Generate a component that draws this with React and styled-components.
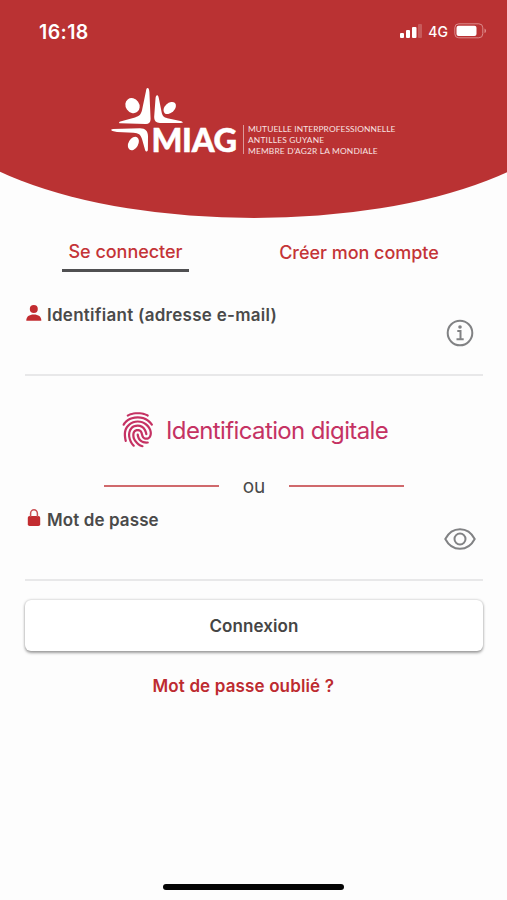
import React from "react";
import styled, { createGlobalStyle } from "styled-components";
import { IoFingerPrint } from "react-icons/io5";

const Global = createGlobalStyle`
  * { box-sizing: border-box; }
  body { margin: 0; background: #fdfdfd; }
  button { border: 0; background: none; padding: 0; font: inherit; }
`;

const Screen = styled.main`
  width: 507px;
  height: 900px;
  display: flex;
  flex-direction: column;
  overflow: hidden;
  background: #fdfdfd;
  color: #4a4a4a;
  font-family: Inter, "Liberation Sans", sans-serif;
`;

const Header = styled.header`
  flex: none;
  width: 660px;
  height: 218px;
  margin-left: -76.5px;
  padding: 0 76.5px;
  background: #ba3233;
  border-radius: 0 0 330px 330px / 0 0 128px 128px;
  color: #fff;
`;

const StatusBar = styled.div`
  display: flex;
  align-items: center;
  justify-content: space-between;
  height: 62px;
  padding: 0 20px 0 39px;
`;

const Time = styled.span`
  padding-top: 2px;
  font-size: 19.5px;
  font-weight: 600;
  letter-spacing: 0.4px;
`;

const StatusIcons = styled.div`
  display: flex;
  align-items: center;
  gap: 6px;
`;

const Network = styled.span`
  font-size: 14px;
  font-weight: 500;
`;

const Logo = styled.div`
  display: flex;
  height: 72px;
  margin: 24px 0 0 111px;
`;

const LogoMark = styled.svg`
  flex: none;
  width: 72px;
  height: 72px;
  fill: #fff;
`;

const Brand = styled.strong`
  width: 86px;
  margin: 37px 0 0 -31.5px;
  font: 900 32.5px/34px Lato, sans-serif;
  letter-spacing: -0.3px;
  -webkit-text-stroke: 0.5px #fff;
`;

const Tagline = styled.div`
  flex: none;
  height: 29px;
  margin: 39px 0 0 5.5px;
  padding-left: 4px;
  border-left: 1px solid #dc9a9a;
  color: #f8e2e2;
  font: 400 8.4px/11px Lato, sans-serif;
  white-space: nowrap;
`;

const TagLine = styled.div`
  margin-top: ${(p) => p.$offset || 0}px;
  letter-spacing: ${(p) => p.$track}px;
`;

const Tabs = styled.nav`
  display: flex;
  height: 57px;
  padding: 17px 0 0 62px;
`;

const Tab = styled.button`
  flex: none;
  width: ${(p) => p.$width}px;
  height: 37px;
  margin-right: 80px;
  padding-top: 1px;
  padding-bottom: ${(p) => (p.$active ? 2 : 0)}px;
  border-bottom: 3px solid ${(p) => (p.$active ? "#505052" : "transparent")};
  color: #c43437;
  font-size: 18px;
  font-weight: 500;
  letter-spacing: -0.03px;
  white-space: nowrap;
`;

const Field = styled.section`
  flex: none;
  display: flex;
  justify-content: space-between;
  height: ${(p) => p.$height}px;
  margin: 0 24px 0 25px;
  border-bottom: 2px solid #e8e8e9;
`;

const FieldLabel = styled.label`
  display: flex;
  align-items: center;
  height: 24px;
  margin-top: ${(p) => p.$top}px;
  font-size: 17px;
  font-weight: 600;
  letter-spacing: ${(p) => p.$track}px;
`;

const LabelIcon = styled.svg`
  width: 18px;
  height: 20px;
  margin: 0 4px 5px 0;
  fill: #c22c30;
`;

const FieldAction = styled.svg`
  width: 34px;
  height: 30px;
  margin: ${(p) => p.$top}px 6.5px 0 0;
  fill: none;
  stroke: #818284;
  stroke-width: 2;
`;

const Biometric = styled.button`
  flex: none;
  display: flex;
  align-items: center;
  height: 50px;
  margin: 29px 0 0 119px;
  color: #c53263;
  font-size: 24px;
  letter-spacing: -0.62px;
  white-space: nowrap;

  svg {
    width: 37.5px;
    height: 37.5px;
    margin-right: 9.5px;
  }
`;

const Separator = styled.div`
  flex: none;
  display: flex;
  align-items: center;
  height: 30px;
  margin: 16px 103px 0 104px;
  gap: 24px;
  font-size: 19px;

  &::before, &::after {
    content: "";
    flex: 1;
    height: 2px;
    background: #d0696c;
  }
`;

const Submit = styled.button`
  flex: none;
  height: 51px;
  margin: 19px 24px 0 25px;
  border-radius: 6px;
  background: #fff;
  box-shadow: 0 1.5px 3px rgba(0, 0, 0, 0.36), 0 0 3px rgba(0, 0, 0, 0.14);
  color: #454545;
  font-size: 17px;
  font-weight: 600;
  letter-spacing: 0.1px;
`;

const Forgot = styled.button`
  align-self: flex-start;
  height: 24px;
  margin: 23px 0 0 152.5px;
  color: #bd2b30;
  font-size: 17px;
  font-weight: 600;
  letter-spacing: 0.14px;
  white-space: nowrap;
`;

const HomeBar = styled.div`
  flex: none;
  width: 181px;
  height: 6px;
  margin: auto 0 10px 163px;
  border-radius: 3px;
  background: #050505;
`;

const Signal = () => (
  <svg width="22" height="14" viewBox="0 0 22 14" fill="#fff">
    <rect x="0" y="9" width="4" height="5" rx="1" />
    <rect x="6" y="6" width="4" height="8" rx="1" />
    <rect x="12" y="3" width="4.5" height="11" rx="1" />
    <rect x="18" y="0" width="4" height="14" rx="1" opacity="0.2" />
  </svg>
);

const Battery = () => (
  <svg width="33" height="16" viewBox="0 0 33 16">
    <rect x="0.8" y="0.8" width="28" height="14" rx="4" fill="none" stroke="#dd8b8b" />
    <rect x="2.5" y="2.7" width="20" height="10.3" rx="2" fill="#fff" />
    <path d="M30.5 5.5c2 .8 2 3.8 0 4.6z" fill="#dd8b8b" />
  </svg>
);

export default function App() {
  return (
    <Screen>
      <Global />
      <Header>
        <StatusBar>
          <Time>16:18</Time>
          <StatusIcons>
            <Signal />
            <Network>4G</Network>
            <Battery />
          </StatusIcons>
        </StatusBar>
        <Logo>
          <LogoMark viewBox="0 0 72 72">
            <ellipse cx="21.5" cy="19.6" rx="6.8" ry="7.9" transform="rotate(-35 21.5 19.6)" />
            <path d="M36.6 2c1.1 0 1.5 1.2 1.8 4l1.2 27c0 3.5-2 5.2-5 5L9.5 37.3c-1.8 0-2-1.4-.2-1.9L24 31.4c4.7-1.2 6.3-3.3 7.2-8.1l3.7-17.7c.4-2.5.7-3.6 1.7-3.6z" />
            <path d="M46.2 9.2c1 0 1.3 1.4 1.7 3.3l2.7 13.5c.6 3.6 2 5.4 5.8 6.2l13 2.8c3 .7 3.2 1.9.6 1.9H49c-4 0-6-2.3-5.8-6.5l1.3-17.7c.2-2.2.6-3.5 1.7-3.5z" />
            <ellipse cx="58.7" cy="22" rx="7.2" ry="4.9" transform="rotate(-43 58.7 22)" />
            <path d="M1.5 45c-1.8-.5-1.6-1.8.5-2L29 42.3c5.6 0 8 3 8 8l-.1 13c0 2.6-2 3-2.8.7L31 53c-1.4-4.4-3.5-6-8.5-6.2L6 45.9z" />
            <ellipse cx="22.4" cy="57.5" rx="4.8" ry="7.3" transform="rotate(30 22.4 57.5)" />
          </LogoMark>
          <Brand>MIAG</Brand>
          <Tagline>
            <TagLine $offset={-1} $track={0.09}>MUTUELLE INTERPROFESSIONNELLE</TagLine>
            <TagLine $track={0.2}>ANTILLES GUYANE</TagLine>
            <TagLine $track={0.16}>MEMBRE D’AG2R LA MONDIALE</TagLine>
          </Tagline>
        </Logo>
      </Header>
      <Tabs>
        <Tab $active $width={127}>Se connecter</Tab>
        <Tab $width={180}>Créer mon compte</Tab>
      </Tabs>
      <Field $height={101}>
        <FieldLabel $top={28} $track={0.27}>
          <LabelIcon viewBox="0 0 18 20">
            <circle cx="8.8" cy="6" r="4" />
            <path d="M1.3 17.8c-.3-4.2 3-6.4 7.5-6.4s7.8 2.2 7.5 6.4z" />
          </LabelIcon>
          Identifiant (adresse e-mail)
        </FieldLabel>
        <FieldAction $top={43} viewBox="0 0 34 30">
          <circle cx="17" cy="15" r="12.3" />
          <path d="M14.3 13h3.2v8M13.5 21.2h7.2" />
          <circle cx="17" cy="9" r="1.8" fill="#818284" stroke="none" />
        </FieldAction>
      </Field>
      <Biometric>
        <IoFingerPrint />
        Identification digitale
      </Biometric>
      <Separator>ou</Separator>
      <Field $height={80}>
        <FieldLabel $top={7} $track={0.1}>
          <LabelIcon viewBox="0 0 18 20">
            <rect x="2.8" y="8" width="12.4" height="10" rx="1.8" />
            <path d="M5.6 9V5.4c0-4.8 6.8-4.8 6.8 0V9" fill="none" stroke="#c95054" strokeWidth="1.5" />
          </LabelIcon>
          Mot de passe
        </FieldLabel>
        <FieldAction $top={22.5} viewBox="0 0 34 30">
          <path d="M2.3 15C9 2 25 2 31.7 15 25 28 9 28 2.3 15z" />
          <circle cx="17" cy="15" r="5.5" />
        </FieldAction>
      </Field>
      <Submit>Connexion</Submit>
      <Forgot>Mot de passe oublié ?</Forgot>
      <HomeBar />
    </Screen>
  );
}
